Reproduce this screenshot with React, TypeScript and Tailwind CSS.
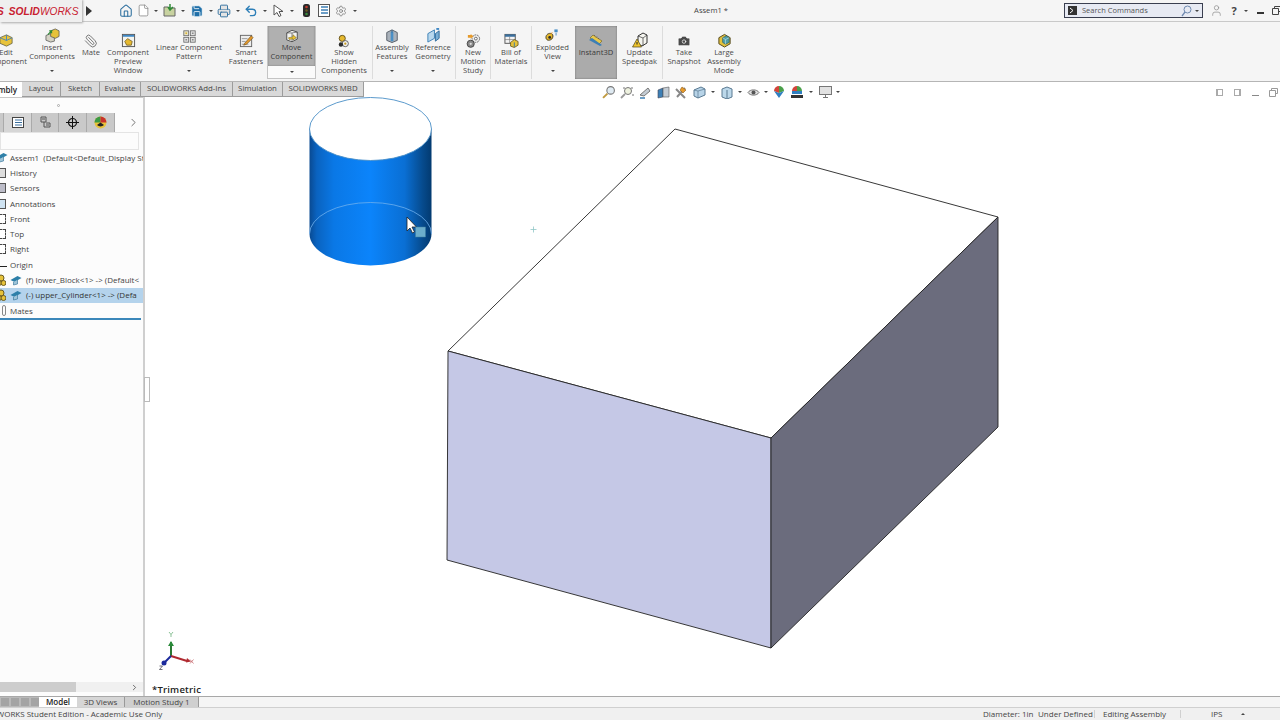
import type { ReactNode } from "react"
import { Camera, ChevronRight, File, Home, Paperclip, Printer, Save, Settings, Undo2, User } from "lucide-react"

const Dot = ({ w = 10 }: { w?: number }) => (
  <div className="flex shrink-0 justify-center" style={{ width: w }}>
    <div className="h-0 w-0 border-x-[2px] border-t-[2px] border-x-transparent border-t-[#444]" />
  </div>
)

const Cell = ({ w, children }: { w: number; children: ReactNode }) => (
  <div className="flex shrink-0 items-center justify-center" style={{ width: w }}>
    {children}
  </div>
)

const Svg = ({ children, size = 15 }: { children: ReactNode; size?: number }) => (
  <svg width={size} height={size} viewBox="0 0 16 16" className="shrink-0">
    {children}
  </svg>
)

const icons: Record<string, ReactNode> = {
  edit: (
    <Svg>
      <path d="M1 5l7-3 6 3v6l-6 3-7-3z" fill="#e8c33c" stroke="#5a5a40" strokeWidth="0.8" />
      <path d="M8 2v6l6-3M8 8l-7-3" fill="none" stroke="#4b86b8" strokeWidth="1" />
    </Svg>
  ),
  insert: (
    <Svg>
      <path d="M1 8l5-2 4 2v6l-4 1-5-2z" fill="#d4d2c4" stroke="#555" strokeWidth="0.8" />
      <path d="M6 3l5-2 4 2v6l-4 2-5-2z" fill="#e6c23a" stroke="#555" strokeWidth="0.8" />
      <path d="M3 7l4-4h-2.5M7 3v2.5" fill="none" stroke="#2f8a36" strokeWidth="1.3" />
    </Svg>
  ),
  mate: <Paperclip size={14} color="#6f6f6f" strokeWidth={1.6} className="-scale-x-100" />,
  preview: (
    <Svg>
      <rect x="1.5" y="1.5" width="13" height="13" fill="#f4f4ee" stroke="#555" />
      <rect x="2" y="2" width="12" height="2" fill="#3f88c5" />
      <path d="M4 9l3-3 5 3-1 4H6z" fill="#e6b92e" stroke="#6a5520" strokeWidth="0.8" />
    </Svg>
  ),
  linear: (
    <Svg size={13}>
      <rect x="1" y="1" width="6" height="6" fill="#e8e4c8" stroke="#666" />
      <rect x="9" y="1" width="6" height="6" fill="#e2e2e2" stroke="#666" />
      <rect x="1" y="9" width="6" height="6" fill="#e2e2e2" stroke="#666" />
      <rect x="9" y="9" width="6" height="6" fill="#e2e2e2" stroke="#666" />
      <path d="M3 3h2v2H3z" fill="#d8b032" />
      <path d="M11 3h2v2h-2zM3 11h2v2H3zM11 11h2v2h-2z" fill="#8a8a8a" />
    </Svg>
  ),
  smart: (
    <Svg>
      <rect x="1.5" y="2.5" width="12" height="12" fill="#eee" stroke="#666" />
      <path d="M3 6h6M3 9h4M3 12h7" stroke="#999" />
      <path d="M6 11l7-8 2 2-7 7-3 1z" fill="#e59a2c" stroke="#74501a" strokeWidth="0.7" />
    </Svg>
  ),
  move: (
    <Svg size={14}>
      <path d="M2 4.5l6-3 6 2v8l-6 3-6-2z" fill="#f4f4f2" stroke="#444" />
      <path d="M8 4.5v10M8 4.5l6-1M8 4.5l-6 0" fill="none" stroke="#444" strokeWidth="0.7" />
      <path d="M4 10l5-1V6.5l4 3.5-4 2.5V11l-4 1z" fill="#eec52e" stroke="#6c5a1c" strokeWidth="0.6" />
    </Svg>
  ),
  show: (
    <Svg size={14}>
      <circle cx="6" cy="5" r="3.5" fill="#e6b92e" stroke="#5c4a18" />
      <circle cx="9.5" cy="11" r="3.5" fill="#f2f2f2" stroke="#555" />
      <circle cx="4.5" cy="12" r="2.5" fill="#2c2c2c" />
      <circle cx="9.5" cy="11" r="1.3" fill="#c59a22" />
    </Svg>
  ),
  assembly: (
    <Svg size={14}>
      <path d="M2 4l6-3 6 3v9l-6 2.5L2 13z" fill="#a9b1ba" stroke="#4f5660" />
      <rect x="6.5" y="3" width="3" height="11" fill="#4a8fc6" />
      <path d="M8 1v3" stroke="#2d5e88" />
    </Svg>
  ),
  reference: (
    <Svg>
      <path d="M2 6l7-4v9l-7 4z" fill="#b8d8ee" stroke="#3b7fb4" />
      <path d="M10 6l4-3v8l-4 3z" fill="#79aed4" stroke="#2c6a9c" />
      <rect x="11" y="0" width="3" height="2" fill="#3f88c5" />
    </Svg>
  ),
  motion: (
    <Svg>
      <circle cx="10.5" cy="6" r="4" fill="#efefef" stroke="#666" strokeDasharray="2 0.8" />
      <circle cx="10.5" cy="6" r="1.5" fill="#fff" stroke="#666" />
      <circle cx="5" cy="11.5" r="3.8" fill="#888" stroke="#444" />
      <circle cx="5" cy="11.5" r="1.2" fill="#ddd" />
      <path d="M2 2h3v-1l3 2.5-3 2.5V5H2z" fill="#e59a2c" />
    </Svg>
  ),
  bom: (
    <Svg>
      <rect x="1" y="1.5" width="11" height="9.5" fill="#f3f3f3" stroke="#555" />
      <rect x="1" y="1.5" width="11" height="2.5" fill="#3a6f9e" />
      <path d="M1 7h11M6 4v7" stroke="#777" strokeWidth="0.7" />
      <path d="M7 10l4-3 4 2v4l-4 2.5L7 14z" fill="#e6c23a" stroke="#5d4f1a" strokeWidth="0.8" />
      <path d="M11 10v5" stroke="#3a7ca8" />
    </Svg>
  ),
  exploded: (
    <Svg>
      <path d="M1 10c0-3 3-5 6-4 2 .8 2 4 0 6-3 2-6 1-6-2z" fill="#e6b92e" stroke="#40381c" />
      <circle cx="5" cy="10" r="1.5" fill="#2a2a2a" />
      <rect x="10" y="1.5" width="3.5" height="3" fill="#4a8fc6" />
      <path d="M11.8 5v3" stroke="#4a8fc6" />
      <path d="M8 5l-2 1" stroke="#e59a2c" />
    </Svg>
  ),
  instant: (
    <Svg size={16}>
      <path d="M2 6l3-3 9 6-3 3z" fill="#e8c84a" stroke="#6a5a20" strokeWidth="0.6" />
      <path d="M1 8l11 6 2-1-10-7z" fill="#3d7fb5" />
      <path d="M6 4l1-1M8 5.5l1-1M10 7l1-1" stroke="#544" strokeWidth="0.6" />
    </Svg>
  ),
  speedpak: (
    <Svg size={16}>
      <path d="M6 4l5-3 4 2v8l-5 3-4-2z" fill="#f5f5f0" stroke="#333" />
      <path d="M11 6v8M11 6l4-3M11 6l-5-2" stroke="#333" strokeWidth="0.7" />
      <path d="M5 7l4.5 8h-9z" fill="#eec52e" stroke="#4e4318" strokeWidth="0.7" />
      <path d="M5 10v2.5" stroke="#222" />
    </Svg>
  ),
  snapshot: <Camera size={14} color="#fff" fill="#4a4a4a" strokeWidth={1.2} />,
  large: (
    <Svg>
      <path d="M2 5l6-3.5 6 3.5v6.5L8 15l-6-3.5z" fill="#e6c23a" stroke="#4e4318" />
      <path d="M6 5l4-2 3 2v5l-4 2-3-2z" fill="#4f9fa8" stroke="#2e5b60" strokeWidth="0.7" />
      <path d="M9 7v5M6 5l3 2 4-2" stroke="#d8eef0" strokeWidth="0.6" fill="none" />
    </Svg>
  ),
}

type Item = { w: number; lines: string[]; icon: string; high?: boolean; arrow?: boolean }

const RibbonBtn = ({ w, lines, icon, high, arrow }: Item) => (
  <div className="flex h-[53px] shrink-0 flex-col items-center" style={{ width: w }}>
    <div className={high ? "flex h-[17px] items-end" : "flex h-[22px] items-end"}>{icons[icon]}</div>
    <div className="whitespace-nowrap text-center text-[7.6px] leading-[9px] text-[#4a4a4a]">
      {lines.map((l) => (
        <div key={l}>{l}</div>
      ))}
    </div>
    {arrow && (
      <div className="mt-auto mb-[7px]">
        <Dot />
      </div>
    )}
  </div>
)

const Sep = () => <div className="h-[53px] w-px shrink-0 bg-[#dcdcdc]" />

const Tab = ({ w, label, active }: { w: number; label: string; active?: boolean }) => (
  <div
    className={
      active
        ? "flex h-full shrink-0 items-center justify-end overflow-hidden bg-white pr-[5px] text-[8px] font-semibold text-[#222]"
        : "flex h-full shrink-0 items-center justify-center border-r border-b border-[#9c9c9c] bg-[#d9d9d9] text-[7.8px] text-[#444]"
    }
    style={{ width: w }}
  >
    <span className="whitespace-nowrap">{label}</span>
  </div>
)

const HudIcon = ({ children, w = 18 }: { children: ReactNode; w?: number }) => <Cell w={w}>{children}</Cell>

const Cap = () => (
  <svg width="14" height="11" viewBox="0 0 13 11" className="shrink-0">
    <path d="M1 5l7-4 4 2-7 4z" fill="#2d7fa8" />
    <path d="M4 7v3l4-1V5" fill="#9fc4d8" stroke="#2d6f93" strokeWidth="0.6" />
  </svg>
)

const Gold = () => (
  <svg width="10" height="12" viewBox="0 0 10 12" className="shrink-0">
    <circle cx="5" cy="4" r="3" fill="#e6c23a" stroke="#6a5a20" />
    <circle cx="3" cy="9" r="2.5" fill="#e6c23a" stroke="#6a5a20" />
    <circle cx="7.5" cy="9" r="2.5" fill="#e6c23a" stroke="#6a5a20" />
  </svg>
)

const SmallBox = ({ c, dashed }: { c: string; dashed?: boolean }) => (
  <div
    className={
      dashed
        ? "ml-[-4px] h-[10px] w-[10px] shrink-0 border border-dashed border-[#444]"
        : "ml-[-4px] h-[10px] w-[10px] shrink-0 border border-[#555]"
    }
    style={{ backgroundColor: c }}
  />
)

const Row = ({ children, sel }: { children: ReactNode; sel?: boolean }) => (
  <div
    className={
      sel
        ? "flex h-[15.3px] items-center overflow-hidden whitespace-nowrap bg-[#b4d3ec] text-[8px] text-[#333]"
        : "flex h-[15.3px] items-center overflow-hidden whitespace-nowrap text-[8px] text-[#444]"
    }
  >
    {children}
  </div>
)

const items1: Item[] = [
  { w: 50, lines: ["Insert", "Components"], icon: "insert", high: true, arrow: true },
  { w: 28, lines: ["Mate"], icon: "mate" },
  { w: 46, lines: ["Component", "Preview", "Window"], icon: "preview" },
  { w: 76, lines: ["Linear Component", "Pattern"], icon: "linear", high: true, arrow: true },
  { w: 38, lines: ["Smart", "Fasteners"], icon: "smart" },
]

export default function App() {
  return (
    <div
      className="flex h-[720px] w-[1280px] flex-col overflow-hidden bg-white"
      style={{ fontFamily: '"Open Sans", "Noto Sans", sans-serif' }}
    >
      {/* title bar */}
      <div className="relative z-10 flex h-[22px] shrink-0 items-center border-b border-[#c9c9c9] bg-[#f5f5f5]">
        <div className="flex h-[23px] w-[82px] shrink-0 items-center overflow-hidden bg-[#efefef] pt-[2px] shadow-[1px_1px_2px_#aaa]">
          <span
            className="ml-[-3px] whitespace-nowrap text-[10.2px] italic text-[#c8202f]"
            style={{ fontFamily: '"Liberation Sans", sans-serif' }}
          >
            <b>S</b>
            <b className="ml-[5px]">SOLID</b>WORKS
          </span>
        </div>
        <Cell w={14}>
          <div className="h-0 w-0 border-y-[5px] border-l-[6px] border-y-transparent border-l-[#333]" />
        </Cell>
        <div className="w-[21px] shrink-0" />
        <Cell w={18}>
          <Home size={14} color="#2d6f9e" strokeWidth={1.8} />
        </Cell>
        <Cell w={16}>
          <File size={13} color="#777" fill="#fff" strokeWidth={1.3} />
        </Cell>
        <Dot />
        <Cell w={18}>
          <svg width="15" height="13" viewBox="0 0 15 13">
            <path d="M1 3h4l1 1h6v8H1z" fill="#c8d2a0" stroke="#666" />
            <path d="M7 0v5M5 3l2 3 3-3" stroke="#2f8a36" strokeWidth="1.5" fill="none" />
          </svg>
        </Cell>
        <Dot w={8} />
        <Cell w={20}>
          <Save size={14} color="#fff" fill="#1f6fa8" strokeWidth={1.4} />
        </Cell>
        <Dot w={8} />
        <Cell w={18}>
          <Printer size={14} color="#2f6f9e" fill="#e4e4e4" strokeWidth={1.6} />
        </Cell>
        <Dot />
        <Cell w={16}>
          <Undo2 size={14} color="#2d7fb8" strokeWidth={2.4} />
        </Cell>
        <Dot w={12} />
        <Cell w={14}>
          <svg width="11" height="13" viewBox="0 0 11 13">
            <path d="M1 1v10l3-2.5 2 4 2-1-2-4h4z" fill="#fff" stroke="#555" />
          </svg>
        </Cell>
        <Dot w={14} />
        <Cell w={14}>
          <svg width="7" height="13" viewBox="0 0 7 13">
            <rect width="7" height="13" rx="2.5" fill="#2a2a2a" />
            <circle cx="3.5" cy="3" r="1.3" fill="#c23b2c" />
            <circle cx="3.5" cy="6.5" r="1.3" fill="#6a5a20" />
            <circle cx="3.5" cy="10" r="1.3" fill="#3a8a3e" />
          </svg>
        </Cell>
        <Cell w={22}>
          <svg width="12" height="13" viewBox="0 0 12 13">
            <rect x="0.5" y="0.5" width="11" height="12" fill="#fff" stroke="#555" />
            <path d="M3 3h7M3 6h7M3 9h7" stroke="#3d7fb5" strokeWidth="1.4" />
          </svg>
        </Cell>
        <Cell w={12}>
          <Settings size={12} color="#777" strokeWidth={1.5} />
        </Cell>
        <Dot w={16} />
        <div className="ml-[313px] w-[70px] shrink-0 text-center text-[7.6px] text-[#444]">Assem1 *</div>
        <div className="ml-[318px] flex h-[15px] w-[139px] shrink-0 items-center border border-[#3a3f50] bg-[#e7eaf3] pl-[3px]">
          <svg width="9" height="9" viewBox="0 0 9 9">
            <rect width="9" height="9" fill="#333" />
            <path d="M2 2l3 2.5L2 7" stroke="#fff" fill="none" />
          </svg>
          <span className="ml-[5px] text-[7.5px] text-[#555]">Search Commands</span>
          <svg width="11" height="12" viewBox="0 0 11 12" className="ml-auto">
            <circle cx="6.5" cy="4.5" r="3.5" fill="none" stroke="#6f8ab0" />
            <path d="M4 7l-3 4" stroke="#6f8ab0" strokeWidth="1.3" />
          </svg>
          <Dot w={10} />
        </div>
        <Cell w={26}>
          <User size={13} color="#8a8a8a" strokeWidth={1.3} />
        </Cell>
        <div className="w-[10px] shrink-0 text-center text-[11px] font-bold leading-none text-[#444]">?</div>
        <Dot w={13} />
        <Cell w={16}>
          <div className="mt-[5px] h-[2px] w-[7px] bg-[#333]" />
        </Cell>
        <Cell w={16}>
          <svg width="9" height="9" viewBox="0 0 9 9">
            <path d="M2.5 2.5V.5h6v5h-2M.5 2.5h6v6h-6z" fill="none" stroke="#444" />
          </svg>
        </Cell>
      </div>

      {/* ribbon */}
      <div className="flex h-[59px] shrink-0 items-start bg-[#f5f5f5] pt-[4px]">
        <div className="ml-[-15px]">
          <RibbonBtn w={42} lines={["Edit", "Component"]} icon="edit" />
        </div>
        {items1.map((it) => (
          <RibbonBtn key={it.icon} {...it} />
        ))}
        <div className="ml-[2px] flex h-[53px] w-[49px] shrink-0 flex-col overflow-hidden border-x border-b border-[#c4c4c4]">
          <div className="flex h-[40px] shrink-0 flex-col items-center bg-[#b0b0b0] shadow-[inset_0_0_2px_#777]">
            <div className="flex h-[17px] items-end">{icons.move}</div>
            <div className="text-center text-[7.6px] leading-[9px] text-[#3a3a3a]">
              <div>Move</div>
              <div>Component</div>
            </div>
          </div>
          <div className="flex flex-1 items-center justify-center bg-[#fafafa]">
            <Dot />
          </div>
        </div>
        <RibbonBtn w={56} lines={["Show", "Hidden", "Components"]} icon="show" />
        <Sep />
        <RibbonBtn w={38} lines={["Assembly", "Features"]} icon="assembly" high arrow />
        <RibbonBtn w={44} lines={["Reference", "Geometry"]} icon="reference" high arrow />
        <Sep />
        <RibbonBtn w={34} lines={["New", "Motion", "Study"]} icon="motion" />
        <Sep />
        <RibbonBtn w={40} lines={["Bill of", "Materials"]} icon="bom" />
        <Sep />
        <RibbonBtn w={41} lines={["Exploded", "View"]} icon="exploded" high arrow />
        <div className="ml-[2px] flex h-[53px] w-[42px] shrink-0 flex-col items-center bg-[#ababab] shadow-[inset_0_0_2px_#666]">
          <div className="flex h-[22px] items-end">{icons.instant}</div>
          <div className="text-[7.6px] leading-[9px] text-[#3a3a3a]">Instant3D</div>
        </div>
        <RibbonBtn w={45} lines={["Update", "Speedpak"]} icon="speedpak" />
        <Sep />
        <RibbonBtn w={42} lines={["Take", "Snapshot"]} icon="snapshot" />
        <RibbonBtn w={38} lines={["Large", "Assembly", "Mode"]} icon="large" />
      </div>

      {/* command manager tabs + heads-up toolbar */}
      <div className="relative z-10 flex h-[16px] shrink-0 items-center border-t border-[#b5b5b5]">
        <Tab w={22} label="Assembly" active />
        <Tab w={39} label="Layout" />
        <Tab w={39} label="Sketch" />
        <Tab w={41} label="Evaluate" />
        <Tab w={92} label="SOLIDWORKS Add-Ins" />
        <Tab w={50} label="Simulation" />
        <Tab w={81} label="SOLIDWORKS MBD" />
        <div className="mt-[5px] flex items-center">
          <div className="w-[236px] shrink-0" />
          <HudIcon>
            <svg width="14" height="14" viewBox="0 0 13 13">
              <circle cx="8" cy="5" r="3.5" fill="#dfeaf2" stroke="#777" />
              <path d="M5 8l-4 4" stroke="#c09a40" strokeWidth="1.8" />
            </svg>
          </HudIcon>
          <HudIcon>
            <svg width="14" height="13" viewBox="0 0 14 13">
              <circle cx="8" cy="5" r="3.5" fill="#eef2df" stroke="#777" />
              <path d="M5 8l-4 4" stroke="#999" strokeWidth="1.8" />
              <path d="M3 2h2M12 1v2M13 8v2" stroke="#777" />
            </svg>
          </HudIcon>
          <HudIcon>
            <svg width="14" height="13" viewBox="0 0 14 13">
              <path d="M2 9l8-7 2 3-6 5z" fill="#c4ccd4" stroke="#777" />
              <path d="M2 12h5" stroke="#3d7fb5" strokeWidth="1.5" />
            </svg>
          </HudIcon>
          <HudIcon>
            <svg width="13" height="13" viewBox="0 0 13 13">
              <path d="M1 4l5-2v9l-5 1z" fill="#3d7fb5" stroke="#445" strokeWidth="0.6" />
              <path d="M6 2l6-1v10l-6 0z" fill="#c4ccd4" stroke="#555" strokeWidth="0.6" />
            </svg>
          </HudIcon>
          <HudIcon>
            <svg width="14" height="13" viewBox="0 0 14 13">
              <path d="M2 3l9 9M11 2L3 11" stroke="#888" strokeWidth="2" />
              <path d="M8 1l4 3-3 3-3-3z" fill="#e59a2c" stroke="#8a5a1c" strokeWidth="0.6" />
            </svg>
          </HudIcon>
          <HudIcon>
            <svg width="13" height="13" viewBox="0 0 13 13">
              <path d="M1 4l7-3 4 2v6l-7 3-4-2z" fill="#b8d4e8" stroke="#5a7a92" />
              <path d="M5 5v7M5 5l7-2M5 5L1 4" fill="none" stroke="#5a7a92" strokeWidth="0.7" />
            </svg>
          </HudIcon>
          <Dot w={9} />
          <div className="ml-[1px]">
            <HudIcon>
              <svg width="12" height="13" viewBox="0 0 12 13">
                <path d="M1 3l5-2 5 2v8l-5 2-5-2z" fill="#bcd8ea" stroke="#5a7a92" />
                <path d="M6 4v9" stroke="#5a7a92" />
              </svg>
            </HudIcon>
          </div>
          <Dot w={8} />
          <HudIcon>
            <svg width="13" height="11" viewBox="0 0 13 11">
              <path d="M1 5.5C3 2 10 2 12 5.5 10 9 3 9 1 5.5z" fill="#ddd" stroke="#777" />
              <circle cx="6.5" cy="5.5" r="2" fill="#555" />
            </svg>
          </HudIcon>
          <Dot w={8} />
          <HudIcon>
            <svg width="14" height="14" viewBox="0 0 14 14">
              <path d="M7 1a5 5 0 0 0-5 5l5 2z" fill="#d2453a" />
              <path d="M7 1a5 5 0 0 1 5 5L7 8z" fill="#4aa04a" />
              <path d="M2 6l5 2 5-2-5 7z" fill="#2f7fc1" />
            </svg>
          </HudIcon>
          <HudIcon>
            <svg width="14" height="14" viewBox="0 0 14 14">
              <path d="M7 1a5 5 0 0 0-5 5h5z" fill="#d2453a" />
              <path d="M7 1a5 5 0 0 1 5 5H7z" fill="#4aa04a" />
              <path d="M2 6h10v3H2z" fill="#2f7fc1" />
              <path d="M1 10h12v3H1z" fill="#333" />
            </svg>
          </HudIcon>
          <Dot w={10} />
          <HudIcon>
            <svg width="13" height="12" viewBox="0 0 13 12">
              <rect x="0.5" y="0.5" width="12" height="8" fill="#e2e2e2" stroke="#777" />
              <path d="M6.5 9v2M4 11.5h5" stroke="#777" />
            </svg>
          </HudIcon>
          <Dot w={8} />
          <div className="ml-[368px] flex items-center">
            <HudIcon>
              <div className="h-[7px] w-[7px] border border-[#aaa] border-l-[2px]" />
            </HudIcon>
            <HudIcon>
              <div className="h-[7px] w-[7px] border border-[#aaa] border-r-[2px]" />
            </HudIcon>
            <HudIcon>
              <div className="mt-[6px] h-px w-[7px] bg-[#888]" />
            </HudIcon>
            <HudIcon>
              <svg width="9" height="9" viewBox="0 0 9 9">
                <path d="M2.5 2.5V.5h6v5h-2M.5 2.5h6v6h-6z" fill="none" stroke="#999" />
              </svg>
            </HudIcon>
          </div>
        </div>
      </div>

      {/* main */}
      <div className="flex min-h-0 flex-1">
        <div className="flex w-[143px] shrink-0 flex-col border-t border-[#c8c8c8] bg-[#fcfcfc]">
          <div className="flex h-[15px] shrink-0 items-center justify-center pl-[1px] pr-[28px]">
            <div className="h-[3px] w-[3px] rounded-full border border-[#aaa]" />
          </div>
          <div className="flex h-[19px] shrink-0 items-stretch">
            <div className="flex w-[115px] bg-[#c9c9c9] pl-[3px]">
              <div className="flex w-[29px] items-center justify-center border-x border-[#aaa] bg-[#d6d6d6]">
                <svg width="12" height="11" viewBox="0 0 12 11">
                  <rect x="0.5" y="0.5" width="11" height="10" fill="#fff" stroke="#444" />
                  <path d="M3 3h7M3 5.5h7M3 8h7" stroke="#3a6f9e" />
                </svg>
              </div>
              <div className="flex w-[27px] items-center justify-center border-r border-[#aaa]">
                <svg width="11" height="13" viewBox="0 0 11 13">
                  <path d="M1 1h5v5H1zM4 6v5h6V7H6" fill="none" stroke="#555" />
                  <path d="M2 3h3M6 9h3" stroke="#555" />
                </svg>
              </div>
              <div className="flex w-[28px] items-center justify-center border-r border-[#aaa]">
                <svg width="13" height="13" viewBox="0 0 13 13">
                  <circle cx="6.5" cy="6.5" r="4" fill="none" stroke="#111" strokeWidth="1.2" />
                  <path d="M6.5 0v13M0 6.5h13" stroke="#111" />
                </svg>
              </div>
              <div className="flex w-[28px] items-center justify-center border-r border-[#aaa]">
                <svg width="13" height="13" viewBox="0 0 13 13">
                  <circle cx="6.5" cy="6.5" r="6" fill="#e8c33c" />
                  <path d="M6.5 6.5V.5A6 6 0 0 0 .5 6.5z" fill="#3a9a44" />
                  <path d="M6.5 6.5V.5a6 6 0 0 1 6 6z" fill="#c8322c" />
                  <path d="M3 9l3.5-2.5L10 9a5 5 0 0 1-7 0z" fill="#222" />
                </svg>
              </div>
            </div>
            <div className="flex flex-1 items-center justify-end pr-[3px]">
              <ChevronRight size={13} color="#555" strokeWidth={1.5} />
            </div>
          </div>
          <div className="h-[18px] w-[139px] shrink-0 border border-[#e4e4e4]" />
          <div className="flex-1">
            <Row>
              <div className="ml-[-5px] w-[15px] shrink-0">
                <Cap />
              </div>
              Assem1&nbsp; (Default&lt;Default_Display St
            </Row>
            <Row>
              <SmallBox c="#ddd" />
              <span className="ml-[4px]">History</span>
            </Row>
            <Row>
              <SmallBox c="#bcbcc8" />
              <span className="ml-[4px]">Sensors</span>
            </Row>
            <Row>
              <SmallBox c="#cfe3f2" />
              <span className="ml-[4px]">Annotations</span>
            </Row>
            <Row>
              <SmallBox c="#fff" dashed />
              <span className="ml-[4px]">Front</span>
            </Row>
            <Row>
              <SmallBox c="#fff" dashed />
              <span className="ml-[4px]">Top</span>
            </Row>
            <Row>
              <SmallBox c="#fff" dashed />
              <span className="ml-[4px]">Right</span>
            </Row>
            <Row>
              <div className="ml-[-1px] mt-[3px] mr-[1px] h-px w-[8px] shrink-0 bg-[#222]" />
              <span className="ml-[2px]">Origin</span>
            </Row>
            <Row>
              <div className="ml-[-4px] mr-[3px]">
                <Gold />
              </div>
              <Cap />
              <span className="ml-[3px]">(f) lower_Block&lt;1&gt; -&gt; (Default&lt;</span>
            </Row>
            <Row sel>
              <div className="ml-[-4px] mr-[3px]">
                <Gold />
              </div>
              <Cap />
              <span className="ml-[3px]">(-) upper_Cylinder&lt;1&gt; -&gt; (Defa</span>
            </Row>
            <Row>
              <div className="ml-[2px] mr-[2px] h-[11px] w-[4px] shrink-0 rounded-full border border-[#888]" />
              <span className="ml-[2px]">Mates</span>
            </Row>
            <div className="h-[2px] w-[141px] bg-[#3b87ba]" />
          </div>
          <div className="mb-[4px] flex h-[10px] shrink-0 items-center bg-[#f0f0f0]">
            <div className="h-full w-[76px] bg-[#cdcdcd]" />
            <div className="ml-auto mr-[4px]">
              <ChevronRight size={9} color="#444" strokeWidth={2} />
            </div>
          </div>
        </div>

        {/* viewport */}
        <div className="relative flex-1 border-l-2 border-[#cfcfcf] bg-white">
          <div className="absolute left-[-1px] top-[280px] h-[25px] w-[6px] border border-[#bbb] bg-white" />
          <svg viewBox="145 97 1135 599" className="absolute inset-0 h-full w-full overflow-visible">
            <defs>
              <linearGradient id="cyl" x1="0" x2="1" y1="0" y2="0">
                <stop offset="0" stopColor="#094a92" />
                <stop offset="0.06" stopColor="#0a63c0" />
                <stop offset="0.2" stopColor="#0a78e6" />
                <stop offset="0.5" stopColor="#0b84fb" />
                <stop offset="0.78" stopColor="#0a6fd4" />
                <stop offset="0.93" stopColor="#064a8c" />
                <stop offset="1" stopColor="#033a70" />
              </linearGradient>
            </defs>
            <path d="M309.5 129V234A61 31.5 0 0 0 431.5 234V129Z" fill="url(#cyl)" />
            <ellipse cx="370.5" cy="129" rx="61" ry="31.5" fill="#fff" stroke="#4a8fc6" strokeWidth="0.9" />
            <path d="M309.5 234A61 31.5 0 0 1 431.5 234" fill="none" stroke="#6fb0ee" strokeWidth="0.8" />
            <path d="M407 217v14l3-3 2.5 5 2-1-2.5-5h4.5z" fill="#fff" stroke="#222" strokeWidth="0.8" />
            <rect x="415.5" y="227" width="10" height="10" fill="#6cadcb" stroke="#3f7f9f" strokeWidth="0.5" />
            <path d="M533.5 226.5v6M530.5 229.5h6" stroke="#8fc7c7" strokeWidth="0.8" />

            <path d="M675 129L998 217L771 438L448 351Z" fill="#fff" stroke="#222" strokeWidth="0.9" />
            <path d="M448 351L771 438V648L447 560Z" fill="#c5c8e6" stroke="#222" strokeWidth="0.9" />
            <path d="M771 438L998 217V427L771 648Z" fill="#6b6c7d" stroke="#222" strokeWidth="0.9" />

            <path d="M171 656V642" stroke="#2a7a34" strokeWidth="2" />
            <path d="M171 641l-3 5h6z" fill="#2a8a3a" />
            <path d="M171 656L187 661" stroke="#b02a30" strokeWidth="2" />
            <path d="M187 658l4 3.5-5 1z" fill="#b02a30" />
            <path d="M171 656L164 663" stroke="#1c2a9c" strokeWidth="2" />
            <circle cx="164" cy="663" r="2.5" fill="#1c2a9c" />
            <path d="M169 632l2 2.5 2-2.5M171 634.5v2.5" stroke="#5aa86a" strokeWidth="0.7" fill="none" />
            <path d="M190 659.5l3.5 4M193.5 659.5l-3.5 4" stroke="#c0565c" strokeWidth="0.7" />
            <path d="M159.5 666h3l-3 3.5h3" stroke="#334" strokeWidth="0.7" fill="none" />
          </svg>
          <div className="absolute bottom-0 left-[7px] text-[9.5px] font-semibold leading-[12px] tracking-[0.2px] text-[#222]">
            *Trimetric
          </div>
        </div>
      </div>

      {/* bottom tabs */}
      <div className="flex h-[11px] shrink-0 items-center border-t border-[#a8a8a8] bg-[#f5f5f5] text-[8px] leading-none text-[#444]">
        <div className="flex h-full w-[39px] shrink-0 items-center gap-[2px] bg-[#b9b9b9] pl-[1px]">
          <div className="h-[8px] w-[8px] bg-[#a4a4a4]" />
          <div className="h-[8px] w-[8px] bg-[#a4a4a4]" />
          <div className="h-[8px] w-[8px] bg-[#a4a4a4]" />
          <div className="h-[8px] w-[8px] bg-[#a4a4a4]" />
        </div>
        <div className="flex h-full w-[38px] shrink-0 items-center justify-center bg-white font-semibold text-[#222]">
          Model
        </div>
        <div className="flex h-full w-[48px] shrink-0 items-center justify-center border-r border-[#999] bg-[#d6d6d6]">
          3D Views
        </div>
        <div className="flex h-full w-[74px] shrink-0 items-center justify-center border-r border-[#999] bg-[#cfcfcf]">
          Motion Study 1
        </div>
      </div>

      {/* status bar */}
      <div className="flex h-[13px] shrink-0 items-center border-t border-[#d0d0d0] bg-[#f0f0f0] text-[8px] leading-none text-[#444]">
        <div className="ml-[-26px] w-[191px] shrink-0 whitespace-nowrap">SOLIDWORKS Student Edition - Academic Use Only</div>
        <div className="ml-[818px] w-[55px] shrink-0 whitespace-nowrap">Diameter: 1in</div>
        <div className="w-[57px] shrink-0 whitespace-nowrap border-r border-[#d0d0d0]">Under Defined</div>
        <div className="w-[86px] shrink-0 whitespace-nowrap border-r border-[#d0d0d0] pl-[8px]">Editing Assembly</div>
        <div className="w-[46px] shrink-0 pl-[30px]">IPS</div>
        <div className="ml-[14px] h-0 w-0 border-x-[2px] border-b-[2px] border-x-transparent border-b-[#444]" />
      </div>
    </div>
  )
}
